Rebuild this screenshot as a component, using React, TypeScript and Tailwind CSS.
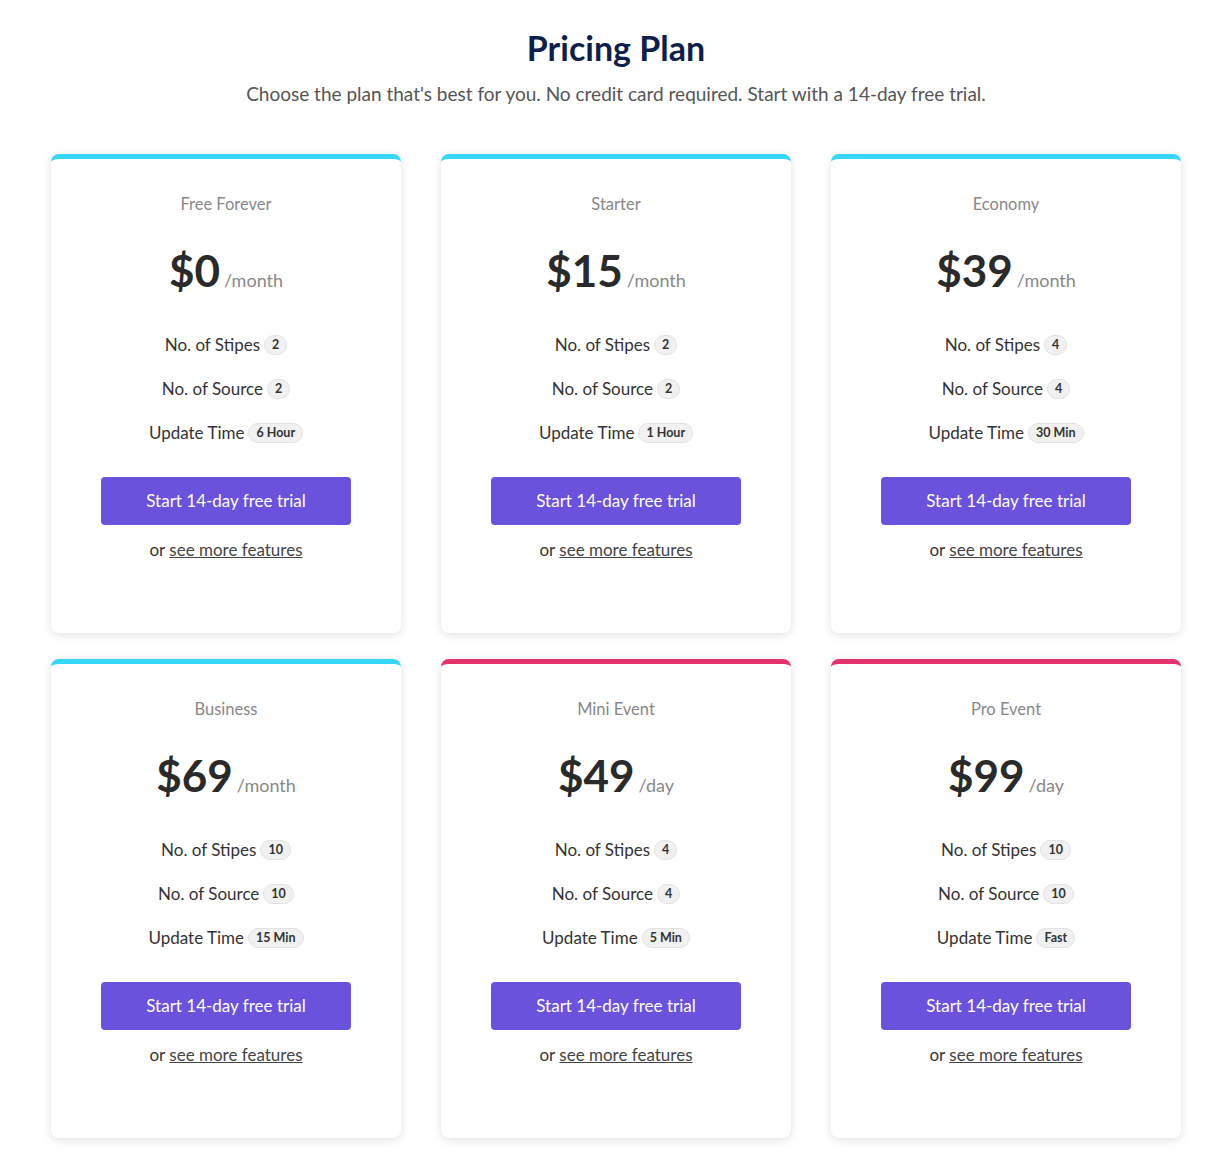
type Plan = {
  name: string
  price: string
  unit: string
  stipes: string
  source: string
  update: string
  accent: string
}

const plans: Plan[] = [
  { name: "Free Forever", price: "$0", unit: "/month", stipes: "2", source: "2", update: "6 Hour", accent: "border-t-[#36d7fb]" },
  { name: "Starter", price: "$15", unit: "/month", stipes: "2", source: "2", update: "1 Hour", accent: "border-t-[#36d7fb]" },
  { name: "Economy", price: "$39", unit: "/month", stipes: "4", source: "4", update: "30 Min", accent: "border-t-[#36d7fb]" },
  { name: "Business", price: "$69", unit: "/month", stipes: "10", source: "10", update: "15 Min", accent: "border-t-[#36d7fb]" },
  { name: "Mini Event", price: "$49", unit: "/day", stipes: "4", source: "4", update: "5 Min", accent: "border-t-[#e4306b]" },
  { name: "Pro Event", price: "$99", unit: "/day", stipes: "10", source: "10", update: "Fast", accent: "border-t-[#e4306b]" },
]

function Badge({ children }: { children: string }) {
  return (
    <span className="ml-1 inline-flex h-[20px] items-center rounded-full border border-[#e2e2e2] bg-[#f1f1f1] px-[7px] text-[12.5px] font-bold text-[#333]">
      {children}
    </span>
  )
}

function Feature({ label, value }: { label: string; value: string }) {
  return (
    <div className="flex h-6 items-center justify-center text-[17px] text-[#333]">
      <span>{label}</span>
      <Badge>{value}</Badge>
    </div>
  )
}

function PlanCard({ plan }: { plan: Plan }) {
  return (
    <div className={`flex h-[479px] flex-col items-center rounded-lg border-t-[5px] bg-white pt-[33px] shadow-[0_2px_10px_rgba(0,0,0,0.12)] ${plan.accent}`}>
      <div className="h-6 text-[16.5px] leading-6 text-[#888]">{plan.name}</div>
      <div className="mt-[26px] flex h-14 items-baseline justify-center">
        <span className="text-[44px] font-bold leading-[56px] text-[#2a2a2a]">{plan.price}</span>
        <span className="ml-1 text-[18px] text-[#888]">{plan.unit}</span>
      </div>
      <div className="mt-[35px] flex flex-col gap-5">
        <Feature label="No. of Stipes" value={plan.stipes} />
        <Feature label="No. of Source" value={plan.source} />
        <Feature label="Update Time" value={plan.update} />
      </div>
      <button className="mt-[32px] h-12 w-[250px] rounded bg-[#6b52dc] text-[17px] text-white">
        Start 14-day free trial
      </button>
      <div className="mt-[13px] h-6 text-[17px] leading-6 text-[#333]">
        or <a href="#" className="text-[#444] underline">see more features</a>
      </div>
    </div>
  )
}

export default function App() {
  return (
    <main className="min-h-screen bg-white pb-8 font-['Lato',sans-serif]">
      <section className="ml-[51px] w-[1130px] pt-[28px]">
        <h1 className="text-center text-[34px] font-bold leading-10 text-[#0f1f4c]">Pricing Plan</h1>
        <p className="mt-[14px] text-center text-[19px] leading-6 text-[#555]">
          Choose the plan that's best for you. No credit card required. Start with a 14-day free trial.
        </p>
        <div className="mt-[48px] grid grid-cols-3 gap-x-10 gap-y-[26px]">
          {plans.map((p) => (
            <PlanCard key={p.name} plan={p} />
          ))}
        </div>
      </section>
    </main>
  )
}
